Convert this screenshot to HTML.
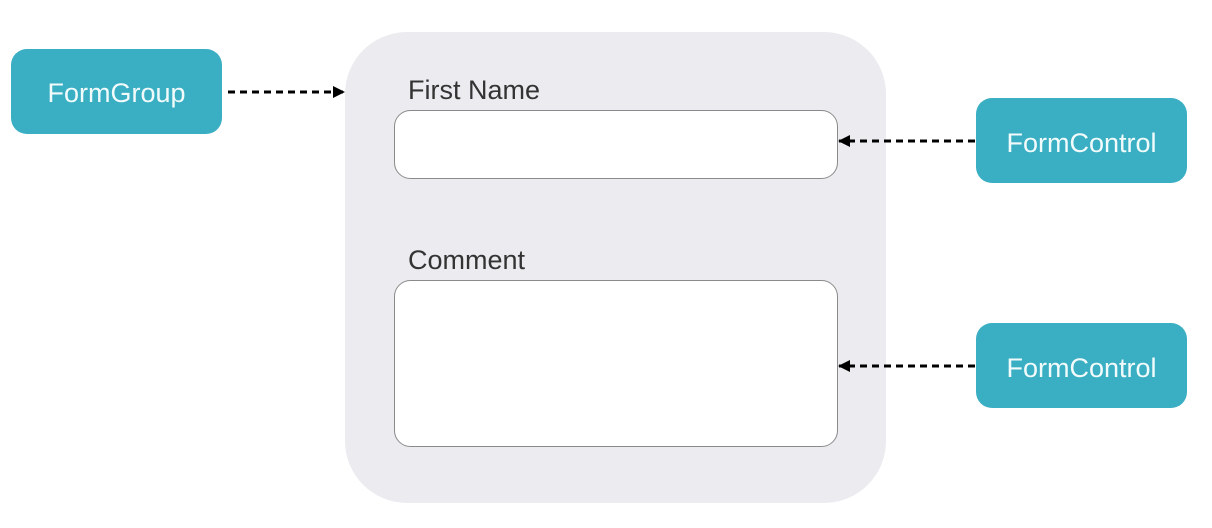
<!DOCTYPE html>
<html><head><meta charset="utf-8"><style>
html,body{margin:0;padding:0;background:#fff;width:1212px;height:528px;overflow:hidden}
text{font-family:"Liberation Sans","DejaVu Sans",sans-serif}
</style></head><body>
<svg width="1212" height="528" viewBox="0 0 1212 528" xmlns="http://www.w3.org/2000/svg">
<defs>
<marker id="ah" markerWidth="12" markerHeight="12" refX="11" refY="6" orient="auto" markerUnits="userSpaceOnUse">
<path d="M0,0 L12,6 L0,12 Z" fill="#000"/></marker>
</defs>
<rect x="345" y="32" width="541" height="471" rx="62" fill="#ecebef"/>
<rect x="394.5" y="110.5" width="443" height="68" rx="16" fill="#fff" stroke="#8a8a8a" stroke-width="1"/>
<rect x="394.5" y="280.5" width="443" height="166" rx="16" fill="#fff" stroke="#8a8a8a" stroke-width="1"/>
<text x="408" y="99" font-size="27" fill="#333">First Name</text>
<text x="408" y="269" font-size="27" fill="#333">Comment</text>
<rect x="11" y="49" width="211" height="85" rx="16" fill="#3aafc3"/>
<text x="116.5" y="102" font-size="27" fill="#f2fbfc" text-anchor="middle">FormGroup</text>
<rect x="976" y="98" width="211" height="85" rx="16" fill="#3aafc3"/>
<text x="1081.5" y="152" font-size="27" fill="#f2fbfc" text-anchor="middle">FormControl</text>
<rect x="976" y="323" width="211" height="85" rx="16" fill="#3aafc3"/>
<text x="1081.5" y="377" font-size="27" fill="#f2fbfc" text-anchor="middle">FormControl</text>
<g stroke="#000" stroke-width="3" stroke-dasharray="7,5" fill="none">
<line x1="228" y1="92" x2="344" y2="92" marker-end="url(#ah)"/>
<line x1="975" y1="141" x2="839" y2="141" marker-end="url(#ah)"/>
<line x1="975" y1="366" x2="839" y2="366" marker-end="url(#ah)"/>
</g>
</svg>
</body></html>
